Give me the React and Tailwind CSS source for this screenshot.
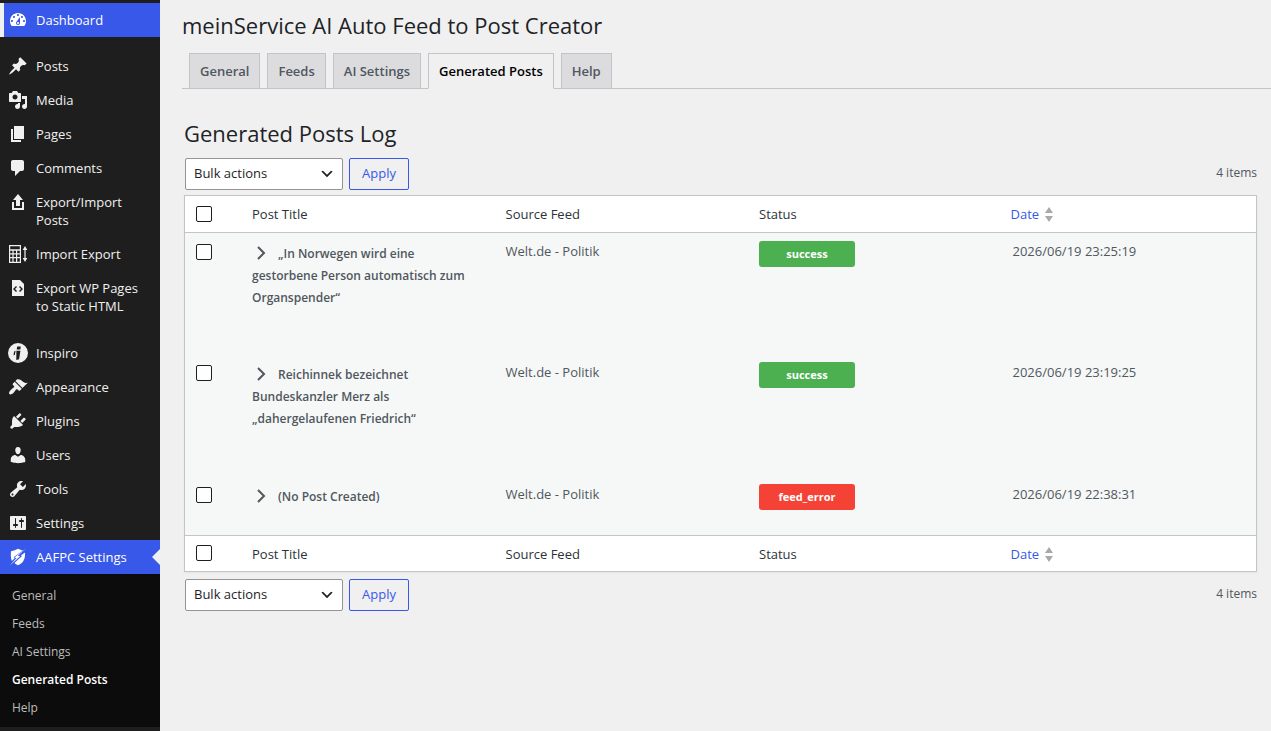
import React, { useState } from "react";
import clsx from "clsx";

const ICONS = {
  dashboard:
    "M3.76 16h12.48c1.1-1.37 1.76-3.11 1.76-5 0-4.42-3.58-8-8-8s-8 3.58-8 8c0 1.89.66 3.63 1.76 5zM10 4c.55 0 1 .45 1 1s-.45 1-1 1-1-.45-1-1 .45-1 1-1zM6 6c.55 0 1 .45 1 1s-.45 1-1 1-1-.45-1-1 .45-1 1-1zm8 0c.55 0 1 .45 1 1s-.45 1-1 1-1-.45-1-1 .45-1 1-1zm-5.37 5.55L12 7v6c0 1.1-.9 2-2 2s-2-.9-2-2c0-.57.24-1.08.63-1.45zM4 10c.55 0 1 .45 1 1s-.45 1-1 1-1-.45-1-1 .45-1 1-1zm12 0c.55 0 1 .45 1 1s-.45 1-1 1-1-.45-1-1 .45-1 1-1zm-5 3c0-.55-.45-1-1-1s-1 .45-1 1 .45 1 1 1 1-.45 1-1z",
  posts:
    "M10.44 3.02l1.82-1.82 6.36 6.35-1.83 1.82c-1.05-.68-2.48-.57-3.41.36l-.75.75c-.92.93-1.04 2.35-.35 3.41l-1.83 1.82-2.41-2.41-2.8 2.79c-.42.42-3.38 2.71-3.8 2.29s1.86-3.39 2.28-3.81l2.79-2.79L4.1 9.36l1.83-1.82c1.05.69 2.48.57 3.4-.36l.75-.75c.93-.92 1.05-2.35.36-3.41z",
  media:
    "M13 11V4c0-.55-.45-1-1-1h-1.67L9 1H5L3.67 3H2c-.55 0-1 .45-1 1v7c0 .55.45 1 1 1h10c.55 0 1-.45 1-1zM7 4.5c1.38 0 2.5 1.12 2.5 2.5S8.38 9.5 7 9.5 4.5 8.38 4.5 7 5.62 4.5 7 4.5zM14 6h5v10.5c0 1.38-1.12 2.5-2.5 2.5S14 17.88 14 16.5s1.12-2.5 2.5-2.5c.17 0 .34.02.5.05V9h-3V6zm-4 8.05V13h2v3.5c0 1.38-1.12 2.5-2.5 2.5S7 17.88 7 16.5 8.12 14 9.5 14c.17 0 .34.02.5.05z",
  pages: "M6 15V2h10v13H6zm-1 1h8v2H3V5h2v11z",
  comments:
    "M5 2h9c1.1 0 2 .9 2 2v7c0 1.1-.9 2-2 2h-2l-5 5v-5H5c-1.1 0-2-.9-2-2V4c0-1.1.9-2 2-2z",
  upload: "M8 14V8H5l5-6 5 6h-3v6H8zm-2 2v-6H4v8h12.01v-8H14v6H6z",
  sheet:
    "M1 1h12v18H1V1zm1.2 1.2v3h9.6v-3H2.2zm0 4.6v2.4h2.2V6.8H2.2zm3.4 0v2.4h2.4V6.8H5.6zm3.6 0v2.4h2.6V6.8H9.2zm-7 3.6v2.6h2.2v-2.6H2.2zm3.4 0v2.6h2.4v-2.6H5.6zm3.6 0v2.6h2.6v-2.6H9.2zm-7 3.8v3.6h2.2v-3.6H2.2zm3.4 0v3.6h2.4v-3.6H5.6zm3.6 0v3.6h2.6v-3.6H9.2zM17 2l2.3 4h-1.7v8h1.7L17 18l-2.3-4h1.7V6h-1.7z",
  code: "M12 2l4 4v12H4V2h8zM9 13l-2-2 2-2-1-1-3 3 3 3zm3 1l3-3-3-3-1 1 2 2-2 2z",
  inspiro:
    "M10 0a10 10 0 1 1 0 20 10 10 0 0 1 0-20zM9.2 3.6h3.6l-.5 2.8H8.700zM8.400 7.800h4l-1.300 8.400-2.800.8zM7.600 7.800L6.800 12l-1.300.2.600-3.600z",
  appearance:
    "M14.48 11.06L7.41 3.99l1.5-1.5c.5-.56 2.3-.47 3.51.32 1.21.8 1.43 1.28 2.91 2.1 1.18.64 2.45 1.26 4.45.85zm-.71.71L6.7 4.7 4.93 6.47c-.39.39-.39 1.02 0 1.41l1.06 1.06c.39.39.39 1.03 0 1.42-.6.6-1.43 1.11-2.21 1.69-.35.26-.7.53-1.01.84C1.43 14.23.4 16.08 1.4 17.07c.99 1 2.84-.03 4.18-1.36.31-.31.58-.66.85-1.02.57-.78 1.08-1.61 1.69-2.21.39-.39 1.02-.39 1.41 0l1.06 1.06c.39.39 1.02.39 1.41 0z",
  plugins:
    "M13.11 4.36L9.87 7.6 8 5.73l3.24-3.24c.35-.34 1.05-.2 1.56.32.52.51.66 1.21.31 1.55zm-8 1.77l.91-1.12 9.01 9.01-1.19.84c-.71.71-2.63 1.16-3.82 1.16H6.14L4.9 17.26c-.59.59-1.54.59-2.12 0-.59-.58-.59-1.53 0-2.12l1.24-1.24v-3.88c0-1.13.4-3.19 1.09-3.89zm7.26 3.97l3.24-3.24c.34-.35 1.04-.21 1.55.31.52.51.66 1.21.31 1.55l-3.24 3.25z",
  users:
    "M10 9.25c-2.27 0-2.73-3.44-2.73-3.44C7 4.02 7.82 2 9.97 2c2.16 0 2.98 2.02 2.71 3.81 0 0-.41 3.44-2.68 3.44zm0 2.57L12.72 10c2.39 0 4.52 2.33 4.52 4.53v2.49s-3.65 1.13-7.24 1.13c-3.65 0-7.24-1.13-7.24-1.13v-2.49c0-2.25 1.94-4.48 4.47-4.48z",
  tools:
    "M16.68 9.77c-1.34 1.34-3.3 1.67-4.95.99l-5.41 6.52c-.99.99-2.59.99-3.58 0s-.99-2.59 0-3.57l6.52-5.42c-.68-1.65-.35-3.61.99-4.95 1.28-1.28 3.12-1.62 4.72-1.06l-2.89 2.89 2.82 2.82 2.86-2.87c.53 1.58.18 3.39-1.08 4.65zM3.81 16.21c.4.39 1.04.39 1.43 0 .4-.4.4-1.04 0-1.43-.39-.4-1.03-.4-1.43 0-.39.39-.39 1.03 0 1.43z",
  settings:
    "M18 16V4c0-.55-.45-1-1-1H3c-.55 0-1 .45-1 1v12c0 .55.45 1 1 1h14c.55 0 1-.45 1-1zM8 11h1c.55 0 1 .45 1 1s-.45 1-1 1H8v1.5c0 .28-.22.5-.5.5s-.5-.22-.5-.5V13H6c-.55 0-1-.45-1-1s.45-1 1-1h1V5.5c0-.28.22-.5.5-.5s.5.22.5.5V11zm5-2h-1c-.55 0-1-.45-1-1s.45-1 1-1h1V5.5c0-.28.22-.5.5-.5s.5.22.5.5V7h1c.55 0 1 .45 1 1s-.45 1-1 1h-1v5.5c0 .28-.22.5-.5.5s-.5-.22-.5-.5V9z",
  shield:
    "M3 4.200C5.500 3.800 8 2.800 10 1.800c1.600.9 3.200 1.400 4.800 1.700L5.600 10.200l1.200.8-2.900 3C2.800 11.500 2.600 8 3 4.200zM17 5.400c.3 5.800-1 10.200-7 12.800-1.400-.6-2.600-1.300-3.600-2.200l7.600-7-1.200-.6zM18.300 1.200l-8.400 7.500 2.200.6L1.600 18.800l6.900-7.900-2.100-.5z",
};

const MENU = [
  { label: "Posts", icon: "posts" },
  { label: "Media", icon: "media" },
  { label: "Pages", icon: "pages" },
  { label: "Comments", icon: "comments" },
  { label: "Export/Import Posts", icon: "upload" },
  { label: "Import Export", icon: "sheet" },
  { label: "Export WP Pages to Static HTML", icon: "code" },
];

const ADMIN_MENU = [
  { label: "Inspiro", icon: "inspiro" },
  { label: "Appearance", icon: "appearance" },
  { label: "Plugins", icon: "plugins" },
  { label: "Users", icon: "users" },
  { label: "Tools", icon: "tools" },
  { label: "Settings", icon: "settings" },
];

const TABS = ["General", "Feeds", "AI Settings", "Generated Posts", "Help"];

const LOGS = [
  {
    id: 4,
    title: "„In Norwegen wird eine gestorbene Person automatisch zum Organspender“",
    feed: "Welt.de - Politik",
    status: "success",
    date: "2026/06/19 23:25:19",
    height: "h-[122px]",
  },
  {
    id: 3,
    title: "Reichinnek bezeichnet Bundeskanzler Merz als „dahergelaufenen Friedrich“",
    feed: "Welt.de - Politik",
    status: "success",
    date: "2026/06/19 23:19:25",
    height: "h-[122px]",
  },
  {
    id: 2,
    title: "(No Post Created)",
    feed: "Welt.de - Politik",
    status: "feed_error",
    date: "2026/06/19 22:38:31",
    height: "h-[59px]",
  },
];

function Icon({ name }) {
  return (
    <svg
      viewBox="0 0 20 20"
      className="size-5 shrink-0"
      fill="currentColor"
      fillRule="evenodd"
      aria-hidden="true"
    >
      <path d={ICONS[name]} />
    </svg>
  );
}

function MenuItem({ label, icon, active }) {
  return (
    <li>
      <a
        href="#"
        className={clsx(
          "relative flex items-start gap-2 p-2 text-[13px] leading-[18px]",
          active ? "bg-[#3858e9] text-white" : "text-[#f0f0f0]"
        )}
      >
        <span className="-my-px flex">
          <Icon name={icon} />
        </span>
        <span>{label}</span>
        {active && (
          <span className="absolute top-1/2 right-0 -translate-y-1/2 border-8 border-transparent border-r-[#f0f0f0]" />
        )}
      </a>
    </li>
  );
}

function Sidebar() {
  return (
    <nav className="w-40 shrink-0 bg-[#1e1e1e] pt-[3px]">
      <a
        href="#"
        className="flex items-center gap-2 border-l-4 border-[#f0f0f0] bg-[#3858e9] py-[7px] pl-1 text-[13px] leading-[18px] text-white"
      >
        <Icon name="dashboard" />
        Dashboard
      </a>
      <ul className="mt-3">
        {MENU.map((item) => (
          <MenuItem key={item.label} {...item} />
        ))}
      </ul>
      <ul className="mt-[13px]">
        {ADMIN_MENU.map((item) => (
          <MenuItem key={item.label} {...item} />
        ))}
        <MenuItem label="AAFPC Settings" icon="shield" active />
      </ul>
      <ul className="bg-[#0c0c0c] pt-2 pb-[5px]">
        {TABS.map((tab) => (
          <li key={tab}>
            <a
              href="#"
              className={clsx(
                "block px-3 py-[5px] text-xs leading-[18px]",
                tab === "Generated Posts"
                  ? "font-semibold text-white"
                  : "text-[#bcbcbc]"
              )}
            >
              {tab}
            </a>
          </li>
        ))}
      </ul>
    </nav>
  );
}

function BulkActions() {
  return (
    <div className="flex items-center gap-1.5 pl-px">
      <div className="relative">
        <select
          aria-label="Select bulk action"
          className="h-8 w-[158px] appearance-none rounded-xs border border-[#949494] bg-white px-2 text-[13px] text-[#1e1e1e]"
        >
          <option>Bulk actions</option>
          <option>Delete</option>
        </select>
        <svg
          viewBox="0 0 20 20"
          className="pointer-events-none absolute top-2 right-2 size-4"
          fill="#1e1e1e"
          aria-hidden="true"
        >
          <path d="M5 6l5 5 5-5 2 1-7 7-7-7 2-1z" />
        </svg>
      </div>
      <button
        type="button"
        className="h-8 w-[60px] rounded-xs border border-[#3858e9] text-[13px] font-medium text-[#3858e9]"
      >
        Apply
      </button>
      <span className="ml-auto pb-0.5 text-xs text-[#50575e]">4 items</span>
    </div>
  );
}

function Checkbox({ label, ...props }) {
  return (
    <input
      type="checkbox"
      aria-label={label}
      className="block size-4 appearance-none rounded-xs border border-[#1e1e1e] bg-white checked:bg-[#3858e9]"
      {...props}
    />
  );
}

function HeaderRow({ checked, onToggle }) {
  return (
    <tr className="h-9 bg-white text-left text-[13px] text-[#2c3338]">
      <td className="pl-[11px]">
        <Checkbox label="Select all" checked={checked} onChange={onToggle} />
      </td>
      <th className="px-2.5 pt-0.5 font-normal">Post Title</th>
      <th className="px-2.5 pt-0.5 font-normal">Source Feed</th>
      <th className="px-2.5 pt-0.5 font-normal">Status</th>
      <th className="px-2 pt-0.5 font-normal">
        <a href="#" className="flex items-center gap-1.5 text-[#3858e9]">
          Date
          <svg
            viewBox="0 0 8 15"
            className="h-[15px] w-2"
            fill="#a7aaad"
            aria-hidden="true"
          >
            <path d="M4 0l4 6H0zM0 9h8l-4 6z" />
          </svg>
        </a>
      </th>
    </tr>
  );
}

function LogRow({ log, checked, onToggle }) {
  return (
    <tr className={clsx("align-top text-[13px] text-[#50575e]", log.height)}>
      <td className="pt-[11px] pl-[11px]">
        <Checkbox
          label={`Select ${log.title}`}
          checked={checked}
          onChange={onToggle}
        />
      </td>
      <td className="py-2.5 pr-6 pl-2.5 text-xs leading-[22px] font-semibold">
        <svg
          viewBox="0 0 10 14"
          className="mr-3 ml-1 inline h-3.5 w-2.5 align-[-2px]"
          fill="none"
          stroke="currentColor"
          strokeWidth="2"
          aria-hidden="true"
        >
          <path d="M2 1l6 6-6 6" />
        </svg>
        {log.title}
      </td>
      <td className="px-2.5 py-2 leading-5">{log.feed}</td>
      <td className="px-2.5 py-2">
        <span
          className={clsx(
            "block w-24 rounded-[3px] text-center text-[11px] leading-[26px] font-bold text-white",
            log.status === "success" ? "bg-[#4caf50]" : "bg-[#f44336]"
          )}
        >
          {log.status}
        </span>
      </td>
      <td className="px-2.5 py-2 leading-5">{log.date}</td>
    </tr>
  );
}

function LogTable() {
  const [selected, setSelected] = useState([]);
  const allSelected = selected.length === LOGS.length;

  const toggle = (id) =>
    setSelected((prev) =>
      prev.includes(id) ? prev.filter((x) => x !== id) : [...prev, id]
    );
  const toggleAll = () => setSelected(allSelected ? [] : LOGS.map((l) => l.id));

  return (
    <div className="mt-[5px] mb-[7px] border border-[#c3c4c7] bg-[#f6f8f7] shadow-xs">
      <table className="w-full table-fixed">
        <colgroup>
          <col className="w-[57px]" />
          <col />
          <col />
          <col />
          <col />
        </colgroup>
        <thead className="border-b border-[#c3c4c7]">
          <HeaderRow checked={allSelected} onToggle={toggleAll} />
        </thead>
        <tbody>
          {LOGS.map((log) => (
            <LogRow
              key={log.id}
              log={log}
              checked={selected.includes(log.id)}
              onToggle={() => toggle(log.id)}
            />
          ))}
        </tbody>
        <tfoot className="border-t border-[#c3c4c7]">
          <HeaderRow checked={allSelected} onToggle={toggleAll} />
        </tfoot>
      </table>
    </div>
  );
}

export default function App() {
  return (
    <div className="flex min-h-screen bg-[#f0f0f0] font-['Open_Sans','Noto_Sans',sans-serif] text-[#1d2327]">
      <Sidebar />
      <main className="min-w-0 grow pl-[22px]">
        <h1 className="pt-2.5 text-[22px] leading-[30px]">
          meinService AI Auto Feed to Post Creator
        </h1>
        <div className="mt-[13px] flex gap-[7px] border-b border-[#c3c4c7] pl-[7px]">
          {TABS.map((tab) => (
            <a
              key={tab}
              href="#"
              className={clsx(
                "-mb-px border border-[#c3c4c7] px-2.5 py-[5px] text-[13px] leading-6 font-semibold",
                tab === "Generated Posts"
                  ? "border-b-[#f0f0f0] bg-[#f0f0f0] text-black"
                  : "bg-[#dcdcde] text-[#50575e]"
              )}
            >
              {tab}
            </a>
          ))}
        </div>
        <section className="pt-[29px] pr-3.5 pl-0.5">
          <h2 className="mb-2.5 text-[22px] leading-[30px]">Generated Posts Log</h2>
          <BulkActions />
          <LogTable />
          <BulkActions />
        </section>
      </main>
    </div>
  );
}
